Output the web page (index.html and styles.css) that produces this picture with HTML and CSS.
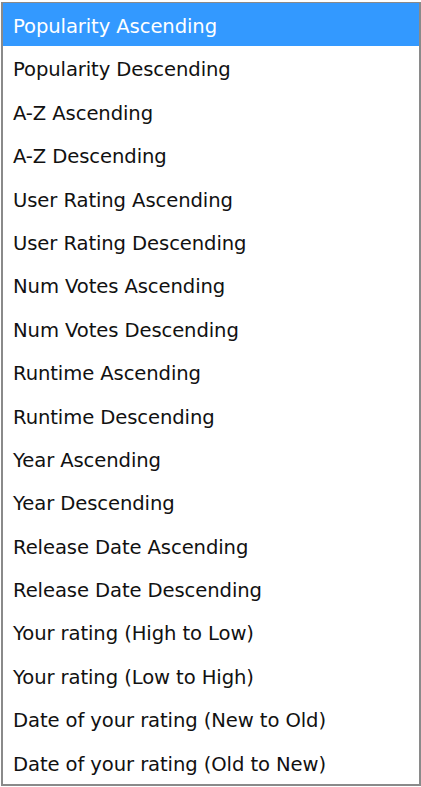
FILE: index.html
```html
<!DOCTYPE html>
<html>
<head>
  <meta charset="UTF-8">
  <title>Sort by</title>
  <link rel="stylesheet" href="styles.css">
</head>
<body>
  <ul class="sort-list">
    <li class="selected">Popularity Ascending</li>
    <li>Popularity Descending</li>
    <li>A-Z Ascending</li>
    <li>A-Z Descending</li>
    <li>User Rating Ascending</li>
    <li>User Rating Descending</li>
    <li>Num Votes Ascending</li>
    <li>Num Votes Descending</li>
    <li>Runtime Ascending</li>
    <li>Runtime Descending</li>
    <li>Year Ascending</li>
    <li>Year Descending</li>
    <li>Release Date Ascending</li>
    <li>Release Date Descending</li>
    <li>Your rating (High to Low)</li>
    <li>Your rating (Low to High)</li>
    <li>Date of your rating (New to Old)</li>
    <li>Date of your rating (Old to New)</li>
  </ul>
</body>
</html>
```

FILE: styles.css
```css
body {
  margin: 0;
  background: #fff;
  font-family: "DejaVu Sans", Verdana, sans-serif;
}

.sort-list {
  list-style: none;
  margin: 2px 0 0 1px;
  padding: 0;
  width: 416px;
  border: 2px solid #8a8a8a;
  border-top-width: 1px;
  background: #fff;
}

.sort-list li {
  box-sizing: border-box;
  height: 43.4px;
  padding: 4px 0 0 10px;
  line-height: 39.4px;
  font-size: 19.6px;
  letter-spacing: -0.1px;
  color: #111;
  white-space: nowrap;
}

.sort-list li.selected {
  background: #3399ff;
  color: #fff;
}
```
